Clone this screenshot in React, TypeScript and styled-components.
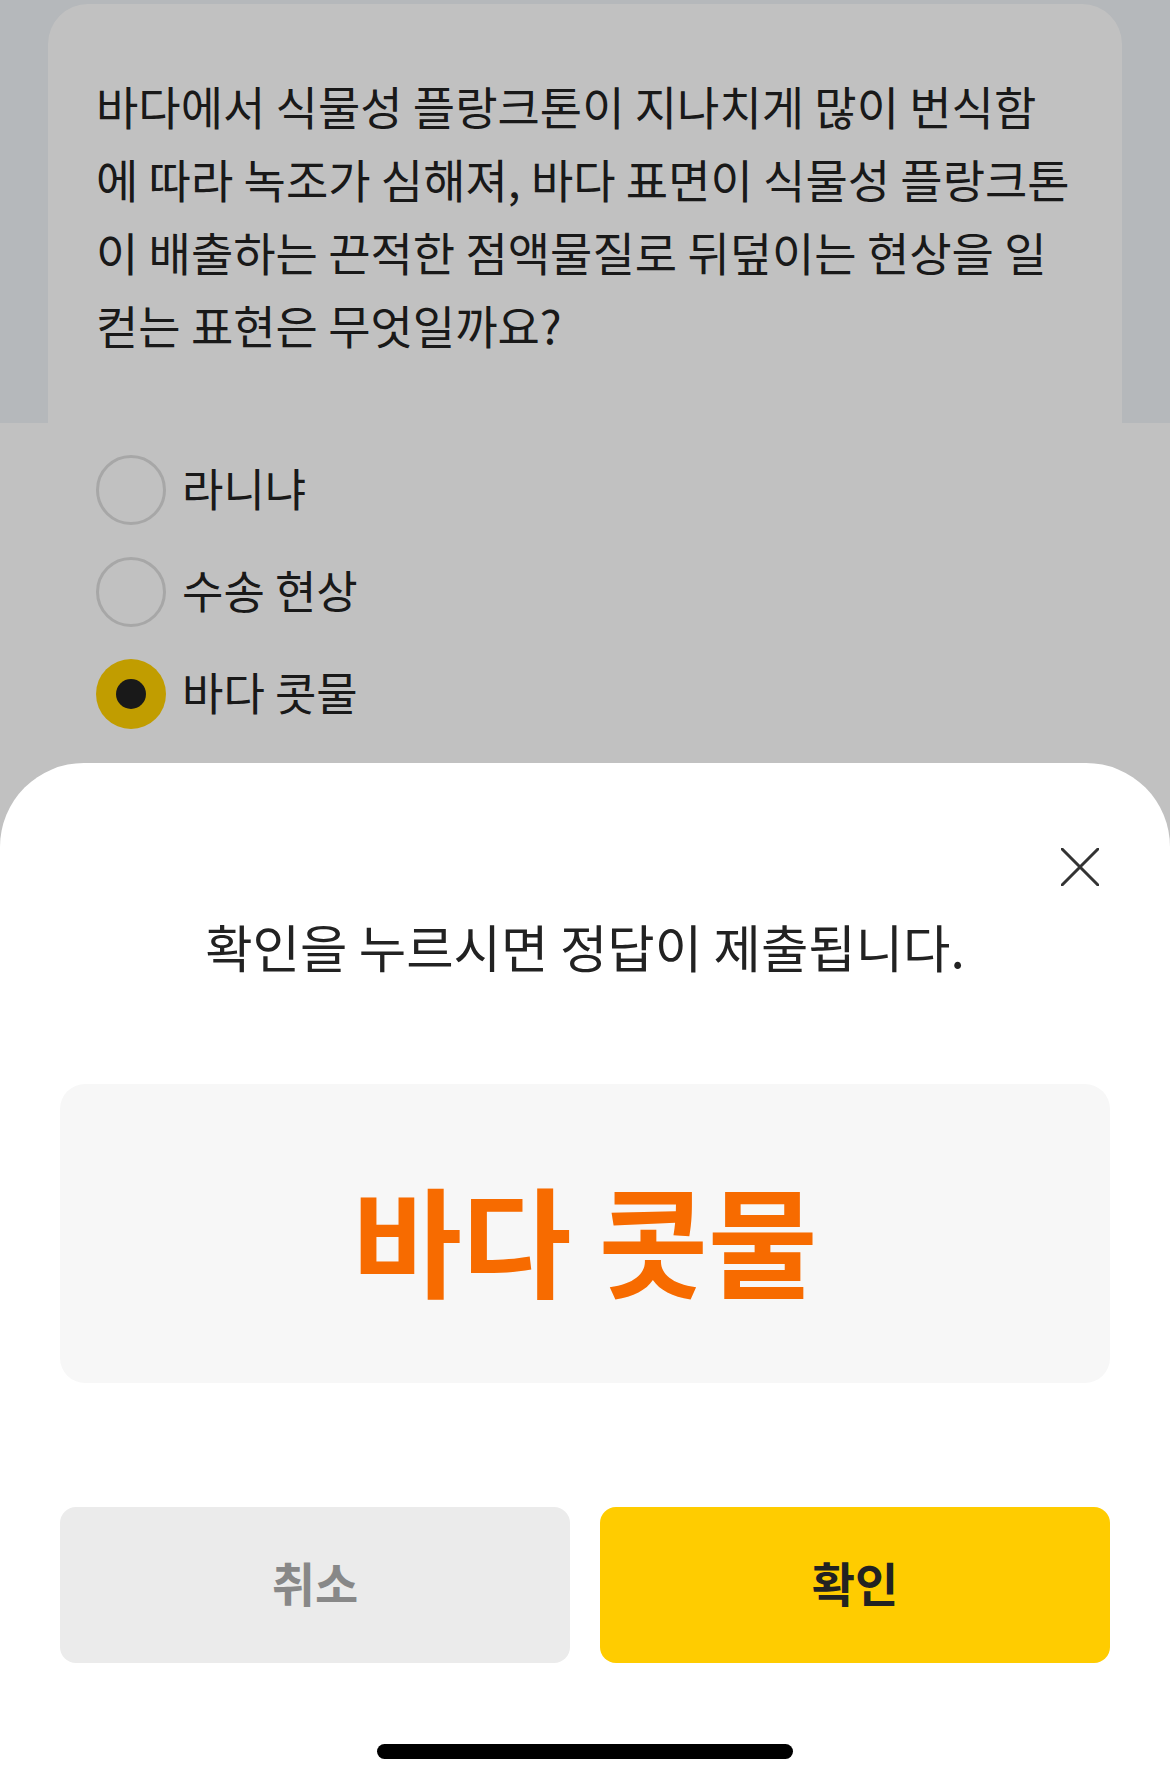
import React from 'react';
import styled, { createGlobalStyle } from 'styled-components';

const GlobalStyle = createGlobalStyle`
  html, body {
    margin: 0;
    padding: 0;
    height: 100%;
  }
  body {
    font-family: "Noto Sans CJK KR", "Noto Sans", sans-serif;
    color: #222;
    overflow: hidden;
  }
  * {
    box-sizing: border-box;
  }
`;

const Page = styled.div`
  min-height: 1783px;
  background: linear-gradient(#eff3f7 0, #eff3f7 423px, #fff 423px);
  padding: 4px 48px 0;
`;

const QuizCard = styled.section`
  background: #fff;
  border-radius: 40px 40px 0 0;
  padding: 65px 48px 0;
  min-height: 900px;
`;

const Question = styled.p`
  margin: 0;
  font-size: 46px;
  line-height: 73px;
  color: #222;
  white-space: nowrap;
`;

const OptionList = styled.ul`
  list-style: none;
  margin: 94px 0 0;
  padding: 0;
  display: flex;
  flex-direction: column;
  gap: 32px;
`;

const Option = styled.li`
  display: flex;
  align-items: center;
  gap: 16px;
  height: 70px;
`;

const Radio = styled.span<{ $checked?: boolean }>`
  width: 70px;
  height: 70px;
  border-radius: 50%;
  flex-shrink: 0;
  display: flex;
  align-items: center;
  justify-content: center;
  border: ${(p) => (p.$checked ? 'none' : '3px solid #ddd')};
  background: ${(p) => (p.$checked ? '#ffd000' : 'transparent')};

  &::after {
    content: '';
    display: ${(p) => (p.$checked ? 'block' : 'none')};
    width: 30px;
    height: 30px;
    border-radius: 50%;
    background: #222;
  }
`;

const OptionLabel = styled.span`
  font-size: 45px;
  color: #222;
  margin-top: -5px;
`;

const Dim = styled.div`
  position: fixed;
  inset: 0;
  background: rgba(0, 0, 0, 0.243);
`;

const Sheet = styled.div`
  position: fixed;
  left: 0;
  right: 0;
  bottom: 0;
  background: #fff;
  border-radius: 84px 84px 0 0;
  padding: 85px 60px 24px;
  display: flex;
  flex-direction: column;
`;

const SheetHeader = styled.div`
  display: flex;
  justify-content: flex-end;
  padding-right: 11px;
`;

const CloseButton = styled.button`
  width: 38px;
  height: 38px;
  padding: 0;
  border: none;
  background: none;
  display: flex;
  cursor: pointer;
`;

const SheetTitle = styled.h2`
  margin: 29px 0 0;
  font-size: 51.5px;
  font-weight: 400;
  line-height: 62px;
  text-align: center;
  color: #222;
`;

const AnswerBox = styled.div`
  margin-top: 107px;
  height: 299px;
  border-radius: 25px;
  background: #f7f7f7;
  display: flex;
  align-items: center;
  justify-content: center;
  padding-top: 6px;
`;

const AnswerText = styled.span`
  font-size: 119px;
  font-weight: 700;
  color: #f76b00;
`;

const ButtonRow = styled.div`
  margin-top: 124px;
  display: grid;
  grid-template-columns: 1fr 1fr;
  gap: 30px;
`;

const ActionButton = styled.button<{ $primary?: boolean }>`
  height: 156px;
  border: none;
  border-radius: 16px;
  padding: 0 0 8px;
  font-family: inherit;
  font-size: 47px;
  font-weight: 700;
  background: ${(p) => (p.$primary ? '#ffcc00' : '#ebebeb')};
  color: ${(p) => (p.$primary ? '#222' : '#888')};
  cursor: pointer;
`;

const HomeIndicator = styled.div`
  margin: 81px auto 0;
  width: 416px;
  height: 15px;
  border-radius: 8px;
  background: #000;
`;

const questionLines = [
  '바다에서 식물성 플랑크톤이 지나치게 많이 번식함',
  '에 따라 녹조가 심해져, 바다 표면이 식물성 플랑크톤',
  '이 배출하는 끈적한 점액물질로 뒤덮이는 현상을 일',
  '컫는 표현은 무엇일까요?',
];

const options = [
  { label: '라니냐', checked: false },
  { label: '수송 현상', checked: false },
  { label: '바다 콧물', checked: true },
];

const CloseIcon = () => (
  <svg width="38" height="38" viewBox="0 0 38 38" fill="none">
    <path d="M1 1L37 37M37 1L1 37" stroke="#333" strokeWidth="3" strokeLinecap="round" />
  </svg>
);

export default function App() {
  return (
    <>
      <GlobalStyle />
      <Page>
        <QuizCard>
          <Question>
            {questionLines.map((line, i) => (
              <React.Fragment key={i}>
                {line}
                {i < questionLines.length - 1 && <br />}
              </React.Fragment>
            ))}
          </Question>
          <OptionList>
            {options.map((o) => (
              <Option key={o.label}>
                <Radio $checked={o.checked} />
                <OptionLabel>{o.label}</OptionLabel>
              </Option>
            ))}
          </OptionList>
        </QuizCard>
      </Page>
      <Dim />
      <Sheet>
        <SheetHeader>
          <CloseButton aria-label="닫기">
            <CloseIcon />
          </CloseButton>
        </SheetHeader>
        <SheetTitle>확인을 누르시면 정답이 제출됩니다.</SheetTitle>
        <AnswerBox>
          <AnswerText>바다 콧물</AnswerText>
        </AnswerBox>
        <ButtonRow>
          <ActionButton>취소</ActionButton>
          <ActionButton $primary>확인</ActionButton>
        </ButtonRow>
        <HomeIndicator />
      </Sheet>
    </>
  );
}
